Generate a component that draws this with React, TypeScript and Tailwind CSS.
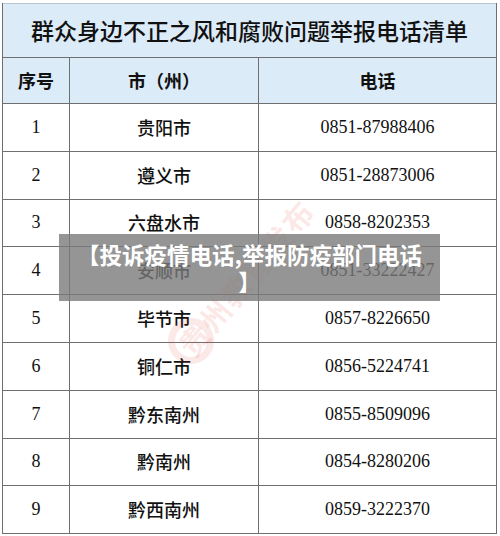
import React from "react"

interface Row {
    no: string
    city: string
    phone: string
}

const rows: Row[] = [
    { no: "1", city: "贵阳市", phone: "0851-87988406" },
    { no: "2", city: "遵义市", phone: "0851-28873006" },
    { no: "3", city: "六盘水市", phone: "0858-8202353" },
    { no: "4", city: "安顺市", phone: "0851-33222427" },
    { no: "5", city: "毕节市", phone: "0857-8226650" },
    { no: "6", city: "铜仁市", phone: "0856-5224741" },
    { no: "7", city: "黔东南州", phone: "0855-8509096" },
    { no: "8", city: "黔南州", phone: "0854-8280206" },
    { no: "9", city: "黔西南州", phone: "0859-3222370" },
]

const sans = "font-['Noto_Sans_CJK_SC',sans-serif]"
const serif = "font-['Liberation_Serif','Noto_Sans_CJK_SC',serif]"

export default function App() {
    return (
        <div className="relative w-[500px] h-[536px] overflow-hidden bg-white pt-[3px] pl-[2px]">
            <div className="w-[495px] border-x border-b border-[#6f6f6f] text-[#111]">
                {/* title */}
                <div className={`flex h-[54px] items-center justify-center border-t border-[#b9c4ce] bg-[#dcebf8] text-[23px] font-medium ${sans}`}>
                    群众身边不正之风和腐败问题举报电话清单
                </div>

                {/* header */}
                <div className={`grid grid-cols-[66px_189px_1fr] h-[46px] border-t border-[#6f6f6f] bg-[#dcebf8] text-[18px] font-bold ${sans}`}>
                    <div className="flex items-center justify-center">序号</div>
                    <div className="flex items-center justify-center border-l border-[#6f6f6f]">市（州）</div>
                    <div className="flex items-center justify-center border-l border-[#6f6f6f]">电话</div>
                </div>

                {rows.map((row) => (
                    <div
                        key={row.no}
                        className="grid grid-cols-[66px_189px_1fr] h-[47.8px] border-t border-[#6f6f6f]"
                    >
                        <div className={`flex items-center justify-center text-[18px] ${serif}`}>{row.no}</div>
                        <div className={`flex items-center justify-center border-l border-[#6f6f6f] text-[18px] font-medium ${sans}`}>
                            {row.city}
                        </div>
                        <div className={`flex items-center justify-center border-l border-[#6f6f6f] text-[18px] ${serif}`}>
                            {row.phone}
                        </div>
                    </div>
                ))}
            </div>

            {/* watermark */}
            <div className={`pointer-events-none absolute left-[150px] top-[255px] -rotate-[50deg] text-[30px] font-bold tracking-[2px] text-[#e0483f]/15 ${sans}`}>
                贵州教育发布
            </div>
            <div className="pointer-events-none absolute left-[168px] top-[318px] size-[46px] rounded-full border-[7px] border-[#e0483f]/12" />

            {/* caption overlay */}
            <div className="absolute left-[59px] top-[234px] flex h-[67px] w-[381px] items-center justify-center bg-[#7a7a7a]/80">
                <p className={`whitespace-nowrap text-center text-[22.5px] font-bold leading-[27px] text-white ${sans}`}>
                    【投诉疫情电话,举报防疫部门电话
                    <br />
                    】
                </p>
            </div>
        </div>
    )
}
